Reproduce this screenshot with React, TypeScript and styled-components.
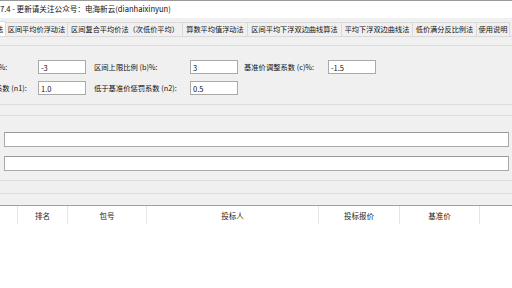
import styled, { createGlobalStyle } from "styled-components";

const GlobalStyle = createGlobalStyle`
  html, body {
    margin: 0;
    padding: 0;
    background: #f0f0f0;
  }
`;

const FONT = `"Noto Sans CJK SC", "Noto Sans", sans-serif`;

const tabs = [
  { label: "区间下浮法", width: 40, selected: true },
  { label: "区间平均价浮动法", width: 62 },
  { label: "区间复合平均价法（次低价平均）", width: 115 },
  { label: "算数平均值浮动法", width: 65 },
  { label: "区间平均下浮双边曲线算法", width: 94 },
  { label: "平均下浮双边曲线法", width: 71 },
  { label: "低价满分反比例法", width: 64 },
  { label: "使用说明", width: 33 },
];

const columns = [
  { title: "", width: 18 },
  { title: "排名", width: 50 },
  { title: "包号", width: 79 },
  { title: "投标人", width: 172 },
  { title: "投标报价", width: 81 },
  { title: "基准价", width: 80 },
  { title: "", width: 40 },
];

const App = () => {
  return (
    <Window>
      <GlobalStyle />
      <TitleBar>7.4 - 更新请关注公众号：电海新云(dianhaixinyun)</TitleBar>
      <TabStrip>
        {tabs.map((tab) => (
          <Tab key={tab.label} $width={tab.width} $selected={tab.selected}>
            {tab.label}
          </Tab>
        ))}
      </TabStrip>
      <TabPage>
        <ParamGroup>
          <FormGrid>
            <Label>区间下限比例 (a)%:</Label>
            <Field defaultValue="-3" />
            <Label>区间上限比例 (b)%:</Label>
            <Field defaultValue="3" />
            <Label>基准价调整系数 (c)%:</Label>
            <Field defaultValue="-1.5" />
            <Label>高于基准价扣分系数 (n1):</Label>
            <Field defaultValue="1.0" />
            <Label>低于基准价惩罚系数 (n2):</Label>
            <Field defaultValue="0.5" />
          </FormGrid>
        </ParamGroup>
        <InputGroup>
          <WideField />
          <WideField />
        </InputGroup>
        <Divider />
        <Table>
          <HeaderRow>
            {columns.map((col, i) => (
              <HeaderCell key={i} $width={col.width}>
                {col.title}
              </HeaderCell>
            ))}
          </HeaderRow>
        </Table>
      </TabPage>
    </Window>
  );
};

const Window = styled.div`
  width: 512px;
  height: 288px;
  overflow: hidden;
  display: flex;
  flex-direction: column;
  background: #f0f0f0;
  font-family: ${FONT};
  color: #111;
`;

const TitleBar = styled.div`
  height: 17px;
  flex: none;
  background: #ffffff;
  border-top: 1px solid #9a9a9a;
  font-size: 7.6px;
  line-height: 16px;
  white-space: nowrap;
`;

const TabStrip = styled.div`
  height: 19px;
  flex: none;
  display: flex;
  align-items: flex-end;
  margin-left: -34px;
  background: #f0f0f0;
`;

const Tab = styled.div<{ $width: number; $selected?: boolean }>`
  flex: none;
  width: ${(p) => p.$width}px;
  height: ${(p) => (p.$selected ? 16 : 15)}px;
  box-sizing: border-box;
  display: flex;
  align-items: center;
  justify-content: center;
  padding-bottom: 1px;
  font-size: 7.2px;
  white-space: nowrap;
  background: ${(p) => (p.$selected ? "#ffffff" : "#f0f0f0")};
  border: 1px solid #dadada;
  border-left: none;
  border-bottom: ${(p) => (p.$selected ? "none" : "1px solid #dadada")};
`;

const TabPage = styled.div`
  flex: 1;
  display: flex;
  flex-direction: column;
  border-top: 1px solid #dadada;
  margin-top: -1px;
`;

const ParamGroup = styled.div`
  margin-top: 8px;
  border-top: 1px solid #dcdcdc;
  border-bottom: 1px solid #dcdcdc;
  padding: 14px 0 9px;
`;

const FormGrid = styled.div`
  display: grid;
  grid-template-columns: 94px 56px 96px 54px 84px 47px;
  row-gap: 7px;
  margin-left: -56px;
  align-items: center;
`;

const Label = styled.span`
  font-size: 7.3px;
  white-space: nowrap;
  line-height: 14px;
`;

const Field = styled.input`
  width: 48px;
  height: 14px;
  box-sizing: border-box;
  border: 1px solid #a9a9a9;
  background: #ffffff;
  padding: 0 2px;
  font-family: ${FONT};
  font-size: 7.5px;
  color: #111;
  outline: none;
`;

const InputGroup = styled.div`
  margin-top: 10px;
  border-top: 1px solid #dcdcdc;
  border-bottom: 1px solid #dcdcdc;
  padding: 16px 3px 9px 4px;
  display: flex;
  flex-direction: column;
  gap: 9px;
`;

const WideField = styled.input`
  width: 505px;
  height: 15px;
  box-sizing: border-box;
  border: 1px solid #a9a9a9;
  border-top-color: #9a9a9a;
  background: #ffffff;
  outline: none;
`;

const Divider = styled.div`
  margin-top: 12px;
  height: 0;
  border-top: 1px solid #dcdcdc;
`;

const Table = styled.div`
  margin-top: 11px;
  flex: 1;
  background: #ffffff;
  border-top: 1px solid #a0a0a0;
`;

const HeaderRow = styled.div`
  display: flex;
  height: 18px;
`;

const HeaderCell = styled.div<{ $width: number }>`
  flex: none;
  width: ${(p) => p.$width}px;
  box-sizing: border-box;
  border-right: 1px solid #e6e6e6;
  display: flex;
  align-items: center;
  justify-content: center;
  font-size: 7.5px;
  white-space: nowrap;
  color: #222;
`;

export default App;
